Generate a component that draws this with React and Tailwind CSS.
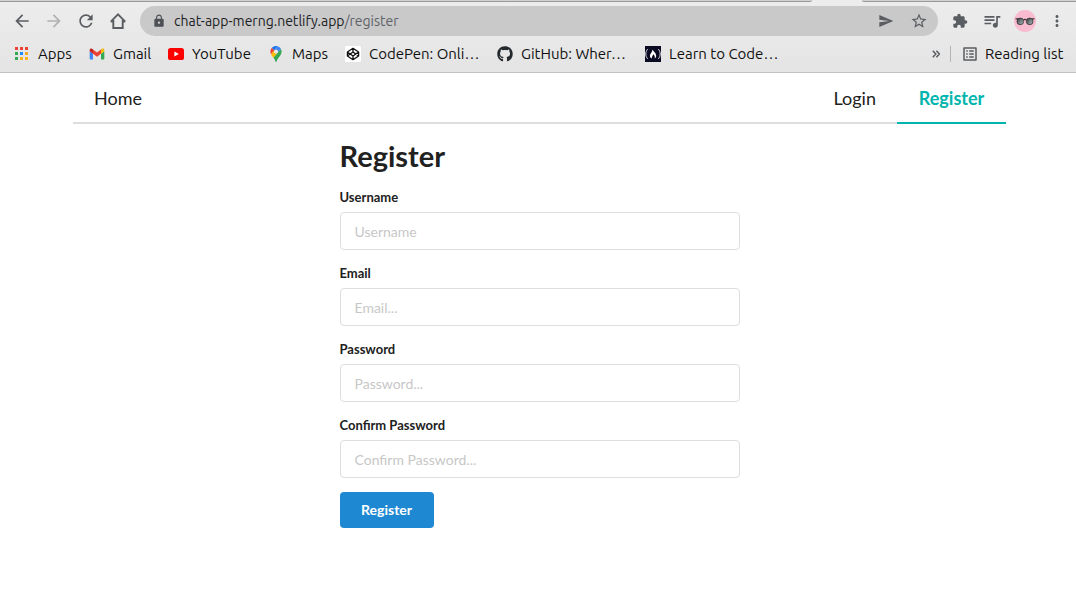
import React from "react";
import {
  MdArrowBack,
  MdArrowForward,
  MdRefresh,
  MdLock,
  MdSend,
  MdStarBorder,
  MdExtension,
  MdQueueMusic,
  MdMoreVert,
  MdListAlt,
} from "react-icons/md";
import { FaGithub } from "react-icons/fa";

function HomeIcon() {
  return (
    <svg viewBox="0 0 16 16" className="size-4" fill="none" stroke="#5a5d61" strokeWidth="1.9" aria-hidden="true">
      <path d="M0.8 8.6 8 1.4l7.2 7.2M3.3 7v8h9.4V7M0.8 8.6h2.5M12.7 8.6h2.5" />
    </svg>
  );
}

function AppsIcon() {
  const colors = ["#ea4335", "#ea4335", "#ea4335", "#34a853", "#1a8cff", "#f5a623", "#34a853", "#fbb31b", "#fbb31b"];
  return (
    <svg viewBox="0 0 16 16" className="size-4 shrink-0" aria-hidden="true">
      {colors.map((c, i) => (
        <rect key={i} x={1 + (i % 3) * 5} y={1 + Math.floor(i / 3) * 5} width="3" height="3" fill={c} />
      ))}
    </svg>
  );
}

function GmailIcon() {
  return (
    <svg viewBox="48 39 96 72" className="w-4 h-3 shrink-0" aria-hidden="true">
      <path fill="#4285f4" d="M58 108h14V74L52 59v43c0 3.32 2.69 6 6 6" />
      <path fill="#34a853" d="M120 108h14c3.32 0 6-2.69 6-6V59l-20 15" />
      <path fill="#fbbc04" d="M120 48v26l20-15v-8c0-7.42-8.47-11.65-14.4-7.2" />
      <path fill="#ea4335" d="M72 74V48l24 18 24-18v26L96 92" />
      <path fill="#c5221f" d="M52 51v8l20 15V48l-5.6-4.2c-5.94-4.45-14.4-.22-14.4 7.2" />
    </svg>
  );
}

function YouTubeIcon() {
  return (
    <svg viewBox="0 0 16 16" className="size-4 shrink-0" aria-hidden="true">
      <rect y="2" width="16" height="12" rx="2.6" fill="#f00" />
      <path d="M6.4 5.5 10.8 8l-4.4 2.5z" fill="#fff" />
    </svg>
  );
}

function MapsIcon() {
  return (
    <svg viewBox="0 0 92.3 132.3" className="w-4 h-4 shrink-0" aria-hidden="true">
      <path fill="#1a73e8" d="M60.2 2.2C55.8.8 51 0 46.1 0 32 0 19.3 6.4 10.8 16.5l21.8 18.3L60.2 2.2z" />
      <path fill="#ea4335" d="M10.8 16.5C4.1 24.5 0 34.9 0 46.1c0 8.7 1.7 15.7 4.6 22l28-33.3-21.8-18.3z" />
      <path fill="#4285f4" d="M46.2 28.5c9.8 0 17.7 7.9 17.7 17.7 0 4.3-1.6 8.3-4.2 11.4 0 0 13.9-16.6 27.5-32.7-5.6-10.8-15.3-19-27-22.7L32.6 34.8c3.3-3.8 8.1-6.3 13.6-6.3" />
      <path fill="#fbbc04" d="M46.2 63.8c-9.8 0-17.7-7.9-17.7-17.7 0-4.3 1.5-8.3 4.1-11.3l-28 33.3c4.8 10.6 12.8 19.2 21 29.9l34.1-40.5c-3.3 3.9-8.1 6.3-13.5 6.3" />
      <path fill="#34a853" d="M59.1 109.2c15.4-24.1 33.3-35 33.3-63 0-7.7-1.9-14.9-5.2-21.3L25.6 98c2.6 3.4 5.3 7.3 7.9 11.3 9.4 14.5 6.8 23.1 12.8 23.1s3.4-8.7 12.8-23.2" />
    </svg>
  );
}

function CodePenIcon() {
  return (
    <svg viewBox="0 0 16 16" className="size-4 shrink-0" aria-hidden="true">
      <rect width="16" height="16" rx="1.5" fill="#fff" />
      <path
        d="M8 2.3 13.6 6v4L8 13.7 2.4 10V6zM8 2.3V6M8 10v3.7M2.4 6 8 10l5.6-4M2.4 10 8 6l5.6 4"
        fill="none"
        stroke="#111"
        strokeWidth="1.3"
        strokeLinejoin="round"
      />
    </svg>
  );
}

function FreeCodeCampIcon() {
  return (
    <svg viewBox="0 0 16 16" className="size-4 shrink-0" aria-hidden="true">
      <rect width="16" height="16" fill="#0a0a23" />
      <path d="M2.6 3.2C.2 6 .2 10 2.6 12.8M13.4 3.2c2.4 2.8 2.4 6.800 0 9.600" fill="none" stroke="#e8e8ee" strokeWidth="1" />
      <path d="M7.500 3.600c.6 1.600 3.700 3.600 3.700 6.200 0 1.200-.5 2.100-1.500 2.700.4-1.600 0-3-1.300-4.300-.7 1.300-1.800 2.600-1.500 4.300-1.300-.5-2-1.400-2-2.800C4.900 7.700 7.600 6.300 7.500 3.600z" fill="#fff" />
    </svg>
  );
}

function Avatar() {
  return (
    <svg viewBox="0 0 22 22" className="size-[22px]" aria-hidden="true">
      <defs>
        <linearGradient id="lens" x1="0" y1="0" x2="1" y2="1">
          <stop offset="0" stopColor="#2f3437" />
          <stop offset="1" stopColor="#b9c7cb" />
        </linearGradient>
      </defs>
      <circle cx="11" cy="11" r="11" fill="#f8bbd0" />
      <path d="M1.500 8.800h3M17.500 8.800h3M9.500 10q1.500-1.200 3 0" stroke="#3b3536" strokeWidth="1.200" fill="none" />
      <circle cx="6.300" cy="11.400" r="3.300" fill="url(#lens)" stroke="#3b3536" strokeWidth=".9" />
      <circle cx="15.700" cy="11.400" r="3.300" fill="url(#lens)" stroke="#3b3536" strokeWidth=".9" />
    </svg>
  );
}

const bookmarks = [
  { label: "Apps", icon: <AppsIcon />, width: "w-[75px]" },
  { label: "Gmail", icon: <GmailIcon />, width: "w-[79px]" },
  { label: "YouTube", icon: <YouTubeIcon />, width: "w-[100px]" },
  { label: "Maps", icon: <MapsIcon />, width: "w-[77px]" },
  { label: "CodePen: Onli…", icon: <CodePenIcon />, width: "w-[152px]" },
  { label: "GitHub: Wher…", icon: <FaGithub className="size-4 shrink-0 text-[#24292e]" />, width: "w-[148px]" },
  { label: "Learn to Code…", icon: <FreeCodeCampIcon />, width: "w-[140px]" },
];

function BrowserChrome() {
  return (
    <header className="border-b border-[#c3c3c3] bg-linear-to-b from-[#ededed] to-[#e4e4e4] font-[Ubuntu,'Noto_Sans',sans-serif]">
      <div className="flex h-0.5" aria-hidden="true">
        <div className="flex-1 rounded-br border-b border-[#999] bg-[#d2d2d2]" />
        <div className="w-[50px]" />
        <div className="w-[214px] rounded-bl border-b border-[#999] bg-[#d2d2d2]" />
      </div>
      <div className="flex h-[38px] items-center pr-2.5 pl-3 text-[#5a5d61]">
        <button aria-label="Back" className="w-8"><MdArrowBack className="size-5" /></button>
        <button aria-label="Forward" className="w-8 text-[#b0b1b3]"><MdArrowForward className="size-5" /></button>
        <button aria-label="Reload" className="w-[34px]"><MdRefresh className="size-5" /></button>
        <button aria-label="Home page" className="w-[30px]"><HomeIcon /></button>
        <div className="flex h-[30px] flex-1 items-center rounded-full bg-[#c9c9c9] pr-2.5 pl-3">
          <MdLock className="size-3.5 shrink-0 text-[#4d5054]" />
          <div className="ml-2 flex-1 text-sm text-[#5f6368]">
            <span className="text-[#202124]">chat-app-merng.netlify.app</span>/register
          </div>
          <button aria-label="Send page" className="w-8"><MdSend className="size-4" /></button>
          <button aria-label="Bookmark page"><MdStarBorder className="size-[18px]" /></button>
        </div>
        <div className="flex items-center pl-3.5">
          <button aria-label="Extensions" className="mr-3.5"><MdExtension className="size-4" /></button>
          <button aria-label="Media" className="mr-3"><MdQueueMusic className="size-5" /></button>
          <button aria-label="Profile" className="mr-3"><Avatar /></button>
          <button aria-label="Menu"><MdMoreVert className="size-[18px]" /></button>
        </div>
      </div>
      <div className="flex h-8 items-center pr-2.5 pb-2 pl-3.5 pt-1 text-[15px] text-[#111]">
        {bookmarks.map((b) => (
          <a key={b.label} href="#" className={`flex items-center gap-2 whitespace-nowrap ${b.width}`}>
            {b.icon}
            {b.label}
          </a>
        ))}
        <div className="ml-auto flex items-center">
          <button aria-label="More bookmarks" className="text-[#5a5d61]">
            <svg viewBox="0 0 8 8" className="size-2" fill="none" stroke="currentColor" strokeWidth="1.5" aria-hidden="true">
              <path d="M.8.8 3.800 4l-3 3.200M4.400.8 7.400 4l-3 3.200" />
            </svg>
          </button>
          <div className="mx-2.5 h-4 w-px bg-[#b5b5b5]" />
          <a href="#" className="flex w-[105px] items-center gap-1.5 whitespace-nowrap">
            <MdListAlt className="size-[18px] shrink-0 text-[#5a5d61]" />
            Reading list
          </a>
        </div>
      </div>
    </header>
  );
}

function MenuBar() {
  return (
    <nav className="mx-auto flex w-full max-w-[933px] border-b-2 border-[#dedede] text-lg leading-[18px] text-[#212121]">
      <a href="#" className="-mb-0.5 border-b-2 border-transparent px-[21px] pt-4 pb-[15px]">Home</a>
      <div className="ml-auto flex">
        <a href="#" className="-mb-0.5 border-b-2 border-transparent px-[21px] pt-4 pb-[15px]">Login</a>
        <a href="#" className="-mb-0.5 min-w-[109px] border-b-2 border-[#00b5ad] px-[21px] pt-4 pb-[15px] text-center font-bold text-[#00b5ad]">Register</a>
      </div>
    </nav>
  );
}

function Field({ id, label, type, placeholder }) {
  return (
    <div className="mb-3.5">
      <label htmlFor={id} className="mb-1.5 block text-[13px] leading-[18px] font-bold">{label}</label>
      <input
        id={id}
        type={type}
        placeholder={placeholder}
        className="block h-[38px] w-full rounded border border-[#dededf] bg-white px-3.5 text-sm outline-none placeholder:text-[#c7c7c7] focus:border-[#85b7d9]"
      />
    </div>
  );
}

export default function App() {
  return (
    <div className="min-h-screen bg-white">
      <BrowserChrome />
      <div className="pl-[3px] font-[Lato,sans-serif] text-[#212121]">
        <MenuBar />
        <main>
          <form className="mx-auto w-full max-w-[400px] pt-3.5" onSubmit={(e) => e.preventDefault()}>
            <h1 className="mb-3.5 text-[29px] leading-9 font-bold">Register</h1>
            <Field id="username" label="Username" type="text" placeholder="Username" />
            <Field id="email" label="Email" type="email" placeholder="Email..." />
            <Field id="password" label="Password" type="password" placeholder="Password..." />
            <Field id="confirm" label="Confirm Password" type="password" placeholder="Confirm Password..." />
            <button type="submit" className="h-9 min-w-[94px] rounded bg-[#1e88d2] px-5 text-sm font-bold text-white">
              Register
            </button>
          </form>
        </main>
      </div>
    </div>
  );
}
